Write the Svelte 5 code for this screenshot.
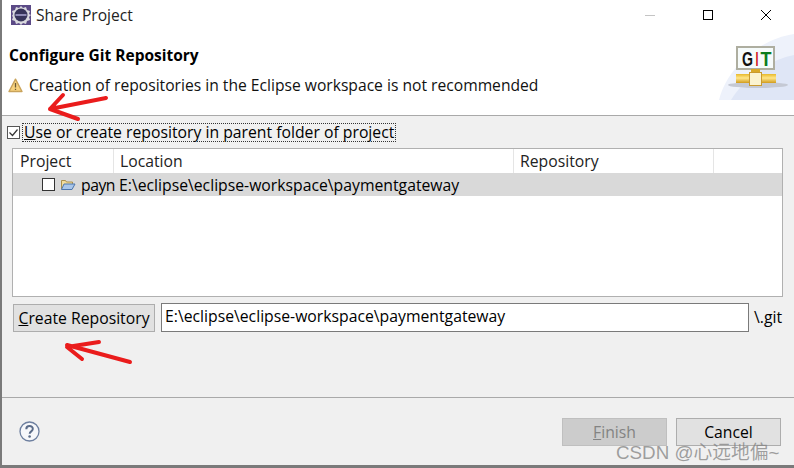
<script>
	const columns = [
		{ name: 'Project', width: 101 },
		{ name: 'Location', width: 400 },
		{ name: 'Repository', width: 200 }
	];
	const projectPath = 'E:\\eclipse\\eclipse-workspace\\paymentgateway';
</script>

<div class="window">
	<div class="titlebar">
		<svg class="appIcon" width="20" height="20" viewBox="0 0 20 20">
			<rect width="20" height="20" fill="#5b4a86" />
			<path d="M10 1l2 2 3-1 1 3 3 1-1 3 2 1-2 2 1 3-3 1-1 3-3-1-2 2-2-2-3 1-1-3-3-1 1-3-1-1 1-2-1-3 3-1 1-3 3 1z" fill="#d9d9de" />
			<circle cx="10" cy="10" r="6.500" fill="#37345a" />
			<path d="M4.500 9h11v2h-11z" fill="#8f8bb5" />
		</svg>
		<span class="title">Share Project</span>
		<div class="winControls">
			<svg width="14" height="14" viewBox="0 0 14 14"><path d="M2 7.500h10" stroke="#c4c4c4" /></svg>
			<svg width="14" height="14" viewBox="0 0 14 14"><rect x="2.500" y="2.500" width="9" height="9" fill="none" stroke="#000" /></svg>
			<svg width="14" height="14" viewBox="0 0 14 14"><path d="M2 2l10 10M12 2L2 12" stroke="#000" fill="none" /></svg>
		</div>
	</div>

	<header class="banner">
		<div class="bannerText">
			<h1>Configure Git Repository</h1>
			<p class="warning">
				<svg width="15" height="15" viewBox="0 0 15 15">
					<path d="M7.500 1.200L14 13.500H1z" fill="#f7d27e" stroke="#c9a35b" stroke-width="1.400" stroke-linejoin="round" />
					<path d="M7.500 5v4.500M7.500 10.800v1.200" stroke="#6b5a35" stroke-width="1.300" />
				</svg>
				Creation of repositories in the Eclipse workspace is not recommended
			</p>
		</div>
		<div class="bannerArt">
			<svg width="75" height="67" viewBox="0 0 75 67">
				<defs>
					<linearGradient id="pipe" x1="0" y1="0" x2="0" y2="1">
						<stop offset="0" stop-color="#e8b92c" />
						<stop offset="0.450" stop-color="#ffe68a" />
						<stop offset="1" stop-color="#d29c1c" />
					</linearGradient>
				</defs>
				<path d="M0 67C8 35 40 6 75 1v66z" fill="#eef2fb" />
				<path d="M12 67C25 45 50 27 75 22v45z" fill="#dfe6f6" />
				<ellipse cx="39" cy="52" rx="30" ry="3" fill="#c5c9d4" />
				<rect x="18" y="14" width="37" height="22" fill="#f6fbfb" stroke="#aeaea0" stroke-width="2" />
				<text x="23" y="33" class="gitG" textLength="11" lengthAdjust="spacingAndGlyphs">G</text>
				<text x="36.500" y="33" class="gitI" textLength="3" lengthAdjust="spacingAndGlyphs">I</text>
				<text x="41.500" y="33" class="gitT" textLength="11" lengthAdjust="spacingAndGlyphs">T</text>
				<rect x="32" y="36" width="9" height="5" fill="#d9a928" />
				<rect x="17" y="41" width="40" height="9" fill="url(#pipe)" />
				<rect x="30.500" y="39.500" width="12" height="13" fill="#fbf3d0" stroke="#c99a30" />
			</svg>
		</div>
	</header>

	<main class="content">
		<label class="parentCheck">
			<span class="checkBox">
				<svg width="13" height="13" viewBox="0 0 13 13"><path d="M2.500 6.500l3 3 5-6" fill="none" stroke="#333" stroke-width="1.200" /></svg>
			</span>
			<span class="parentLabel"><u>U</u>se or create repository in parent folder of project</span>
		</label>

		<div class="table">
			<div class="thead">
				{#each columns as col}
					<div class="th" style="width: {col.width}px">{col.name}</div>
				{/each}
			</div>
			<div class="row">
				<div class="cell projectCell" style="width: {columns[0].width}px">
					<span class="rowCheck"></span>
					<svg width="16" height="13" viewBox="0 0 16 13">
						<path d="M1.500 11V2.500h4l1 1.500h6v2" fill="#f2dc9c" stroke="#a98f4c" />
						<path d="M1.500 11.500l2.500-5.500h11l-3 5.500z" fill="#a9c6ea" stroke="#4d76ad" />
					</svg>
					<span class="clipName">payn</span>
				</div>
				<div class="cell" style="width: {columns[1].width}px">{projectPath}</div>
			</div>
		</div>

		<div class="createRow">
			<button class="btn createBtn"><u>C</u>reate Repository</button>
			<div class="pathInput">{projectPath}</div>
			<span class="suffix">\.git</span>
		</div>
	</main>

	<footer class="footer">
		<svg class="help" width="21" height="21" viewBox="0 0 21 21">
			<circle cx="10.500" cy="10.500" r="9.500" fill="#f6f7fa" stroke="#6d7f9f" stroke-width="1.300" />
			<path d="M7.300 8.200c0-4.300 6.600-4.100 6.500-.2 0 2.300-3 2.400-3.100 4.700" fill="none" stroke="#5a6b88" stroke-width="2" />
			<circle cx="10.600" cy="15.500" r="1.300" fill="#5a6b88" />
		</svg>
		<div class="actions">
			<button class="btn finish" disabled><u>F</u>inish</button>
			<button class="btn cancel">Cancel</button>
		</div>
	</footer>

	<!-- annotations drawn over the screenshot -->
	<svg class="arrows" width="794" height="468" viewBox="0 0 794 468">
		<g fill="none" stroke="#ea1c1c" stroke-width="4" stroke-linecap="round" stroke-linejoin="round">
			<path d="M106 98L50 109M63 95L50 109L78 119" />
			<path d="M130 362L67 345M99 342L67 347L82 359" />
		</g>
	</svg>
	<span class="watermark">CSDN @心远地偏~</span>
</div>

<style>
	:global(body) {
		margin: 0;
		background: #f0f0f0;
	}

	.window {
		position: relative;
		width: 794px;
		height: 468px;
		box-sizing: border-box;
		display: flex;
		flex-direction: column;
		overflow: hidden;
		border-left: 2px solid #7a7a7a;
		border-bottom: 3px solid #7a7a7a;
		background: #f0f0f0;
		color: #000;
		font-family: "Open Sans", "Noto Sans CJK SC", sans-serif;
		font-size: 15.750px;
	}

	.titlebar {
		flex: 0 0 32px;
		display: flex;
		align-items: center;
		padding-left: 9px;
		background: #fff;
	}

	.appIcon {
		margin-top: -2px;
	}

	.title {
		margin: -3px 0 0 5px;
		font-size: 15.600px;
		color: #222;
	}

	.winControls {
		margin: -2px 0 0 auto;
		display: flex;
		gap: 44px;
		padding-right: 21px;
	}

	.banner {
		flex: 0 0 83px;
		display: flex;
		justify-content: space-between;
		background: #fff;
		border-bottom: 1px solid #a9a9a9;
	}

	.bannerText {
		padding: 13px 0 0 7px;
	}

	h1 {
		margin: 0;
		font-size: 15.500px;
		font-weight: 700;
		line-height: 20px;
	}

	.warning {
		margin: 10px 0 0 -1px;
		display: flex;
		align-items: center;
		gap: 6px;
		font-size: 15.650px;
		line-height: 20px;
		color: #111;
	}

	.bannerArt {
		margin-top: 1px;
		height: 67px;
	}

	.bannerArt svg {
		display: block;
	}

	.gitG,
	.gitI,
	.gitT {
		font-family: "Liberation Sans", sans-serif;
		font-size: 20px;
		font-weight: 700;
	}

	.gitG {
		fill: #111;
	}

	.gitI {
		fill: #d01818;
	}

	.gitT {
		fill: #0a7d1c;
	}

	.content {
		flex: 1 1 auto;
		padding: 6px 11px 0 5px;
		border-bottom: 1px solid #a9a9a9;
	}

	.parentCheck {
		display: flex;
		align-items: center;
		gap: 3px;
		height: 20px;
	}

	.checkBox {
		width: 13px;
		height: 13px;
		box-sizing: border-box;
		border: 1px solid #555;
		background: #fff;
		display: flex;
	}

	.checkBox svg {
		margin: -1px;
		flex: none;
	}

	.parentLabel {
		outline: 1px dotted #333;
		padding: 0 1px;
		line-height: 17px;
		white-space: nowrap;
	}

	.table {
		margin: 6px 0 0 5px;
		height: 149px;
		box-sizing: border-box;
		border: 1px solid #b0b0b0;
		background: #fff;
	}

	.thead {
		display: flex;
		height: 24px;
	}

	.th {
		box-sizing: border-box;
		padding: 1px 0 0 6px;
		border-right: 1px solid #e5e5e5;
		color: #222;
	}

	.th:first-child {
		padding-left: 7px;
	}

	.row {
		display: flex;
		height: 23px;
		background: #d9d9d9;
	}

	.cell {
		box-sizing: border-box;
		padding-left: 5px;
		display: flex;
		align-items: center;
		white-space: nowrap;
	}

	.projectCell {
		padding-left: 29px;
		gap: 5px;
	}

	.rowCheck {
		flex: none;
		width: 13px;
		height: 13px;
		box-sizing: border-box;
		border: 1px solid #333;
		background: #fff;
	}

	.projectCell svg {
		flex: none;
	}

	.clipName {
		letter-spacing: -0.500px;
	}

	.createRow {
		margin: 6px 0 0 6px;
		display: flex;
		align-items: flex-start;
	}

	.btn {
		box-sizing: border-box;
		height: 28px;
		padding: 0;
		border: 1px solid #adadad;
		background: #e1e1e1;
		color: #000;
		font: inherit;
	}

	.createBtn {
		flex: 0 0 142px;
		margin-top: 1px;
	}

	.pathInput {
		flex: 0 0 588px;
		margin-left: 6px;
		height: 29px;
		box-sizing: border-box;
		border: 1px solid #7a7a7a;
		background: #fff;
		padding: 1px 0 0 3px;
	}

	.suffix {
		margin-left: 5px;
		padding-top: 3px;
	}

	.footer {
		flex: 0 0 67px;
		box-sizing: border-box;
		display: flex;
		align-items: flex-start;
		justify-content: space-between;
		padding: 20px 13px 0 17px;
	}

	.help {
		margin-top: 3px;
	}

	.actions {
		display: flex;
		gap: 9px;
	}

	.actions .btn {
		width: 105px;
	}

	.finish {
		background: #cccccc;
		border-color: #bfbfbf;
		color: #838383;
	}

	.arrows {
		position: absolute;
		left: -2px;
		top: 0;
		pointer-events: none;
	}

	.watermark {
		position: absolute;
		left: 614px;
		top: 437px;
		font-family: "Liberation Sans", "Noto Sans CJK SC", sans-serif;
		font-size: 18.800px;
		color: rgba(130, 130, 130, 0.75);
		white-space: nowrap;
	}
</style>
